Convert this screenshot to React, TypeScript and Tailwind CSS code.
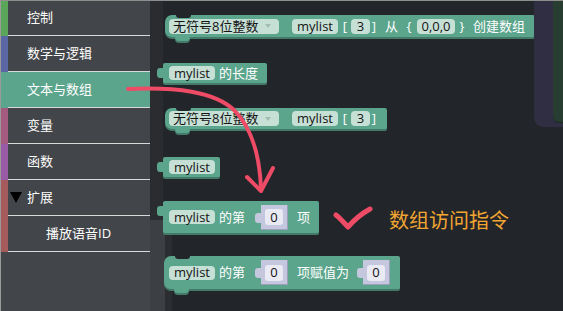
import React from "react";

type Kids = { children?: React.ReactNode; className?: string };

function Pill({ children, className = "" }: Kids) {
  return (
    <span
      className={`inline-flex shrink-0 items-center justify-center rounded-[4px] bg-[#c7e0d6] text-[13px] leading-none text-[#141414] ${className}`}
    >
      {children}
    </span>
  );
}

function T({ children, className = "" }: Kids) {
  return (
    <span className={`inline-flex shrink-0 items-center text-[13px] leading-none text-white ${className}`}>
      {children}
    </span>
  );
}

function Br({ children, className = "" }: Kids) {
  return (
    <span className={`inline-flex w-[6px] shrink-0 justify-center text-[13px] leading-none text-white ${className}`}>
      {children}
    </span>
  );
}

function Socket({ className = "" }: Kids) {
  return (
    <span
      className={`relative inline-flex h-[25px] w-[27px] shrink-0 items-center bg-[#c5c7de] pl-[4px] shadow-[inset_-1px_-1px_0_#9c9fba] ${className}`}
    >
      <span className="absolute -left-[6px] top-[8px] h-[10px] w-[6px] rounded-l-[3px] bg-[#c5c7de]" />
      <span className="inline-flex h-[16px] w-[18px] items-center justify-center rounded-[3px] bg-[#e9eaf4] text-[13px] leading-none text-[#111]">
        0
      </span>
    </span>
  );
}

function Dropdown() {
  return (
    <Pill className="h-[15px] w-[110px] justify-start pl-[4px]">
      <span>无符号8位整数</span>
      <svg className="ml-[7px]" width="6" height="4" viewBox="0 0 6 4">
        <polygon points="0,0 6,0 3,4" fill="#a3bcb2" />
      </svg>
    </Pill>
  );
}

function StatementBlock({ children, className = "" }: Kids) {
  return (
    <div
      className={`relative flex shrink-0 items-center rounded-l-[7px] rounded-r-[2px] bg-[#5ba58c] shadow-[0_2px_0_#437a68] ${className}`}
    >
      <span className="absolute left-[11px] top-0 h-[3px] w-[15px] rounded-b-[3px] bg-[#222529]" />
      <span className="absolute -bottom-[4px] left-[10px] h-[4px] w-[15px] rounded-b-[4px] bg-[#5ba58c] shadow-[0_2px_0_#437a68]" />
      {children}
    </div>
  );
}

function ValueBlock({ children, className = "" }: Kids) {
  return (
    <div
      className={`relative flex shrink-0 items-center rounded-[2px] bg-[#5ba58c] shadow-[0_2px_0_#437a68] ${className}`}
    >
      <span className="absolute -left-[6px] top-[5px] h-[10px] w-[6px] rounded-l-[3px] bg-[#5ba58c]" />
      {children}
    </div>
  );
}

function SideItem({
  label,
  stripe,
  selected = false,
  first = false,
}: {
  label: React.ReactNode;
  stripe: string;
  selected?: boolean;
  first?: boolean;
}) {
  return (
    <div className={`flex ${first ? "h-[35px]" : "h-[36px]"} ${selected ? "bg-[#5ba58c]" : ""}`}>
      <div className={`w-[7px] ${stripe}`} />
      <div className="flex flex-1 items-center border-b border-[#dadada] text-[13px] text-white">{label}</div>
    </div>
  );
}

export default function App() {
  return (
    <div className="relative flex h-[311px] w-[563px] overflow-hidden border-t border-[#8e8e8e] bg-[#222529] font-['Open_Sans','Noto_Sans_CJK_SC',sans-serif]">
      {/* Sidebar */}
      <div className="flex w-[150px] shrink-0 flex-col border-l border-[#9a9a9a] bg-[#424549]">
        <SideItem first stripe="bg-[#5ba55b]" label={<span className="pl-[19px]">控制</span>} />
        <SideItem stripe="bg-[#5b67a5]" label={<span className="pl-[19px]">数学与逻辑</span>} />
        <SideItem selected stripe="bg-[#5ba58c]" label={<span className="pl-[19px]">文本与数组</span>} />
        <SideItem stripe="bg-[#a55b80]" label={<span className="pl-[19px]">变量</span>} />
        <SideItem stripe="bg-[#995ba5]" label={<span className="pl-[19px]">函数</span>} />
        <SideItem
          stripe="bg-[#a55b5b]"
          label={
            <span className="flex items-center pl-[2px]">
              <svg width="12" height="11" viewBox="0 0 12 11">
                <polygon points="0,0 12,0 6,11" fill="#000" />
              </svg>
              <span className="ml-[5px]">扩展</span>
            </span>
          }
        />
        <SideItem stripe="bg-[#a55b5b]" label={<span className="pl-[38px]">播放语音ID</span>} />
      </div>

      {/* Workspace */}
      <div className="relative flex flex-1 flex-col bg-[image:linear-gradient(to_right,#3c3f43_15px,#2b2d31_15px,#2b2d31_22px,transparent_22px),linear-gradient(to_right,#2a2c30_13px,#222529_13px)] bg-[length:100%_100%,100%_100%] bg-[position:0_219px,0_0] bg-no-repeat pt-[14px]">
        {/* Block 1 */}
        <div className="flex">
          <StatementBlock className="ml-[15px] h-[22px] pl-[4px] pr-[10px]">
            <Dropdown />
            <Pill className="ml-[13px] h-[15px] w-[46px]">mylist</Pill>
            <Br className="ml-[4px]">[</Br>
            <Pill className="ml-[3px] h-[15px] w-[19px]">3</Pill>
            <Br className="ml-[1px]">]</Br>
            <T className="ml-[8px]">从</T>
            <Br className="ml-[8px]">{"{"}</Br>
            <Pill className="ml-[5px] h-[15px] w-[38px]">0,0,0</Pill>
            <Br className="ml-[4px]">{"}"}</Br>
            <T className="ml-[8px]">创建数组</T>
          </StatementBlock>
        </div>

        {/* Block 2 */}
        <div className="mt-[26px] flex">
          <ValueBlock className="ml-[13px] h-[20px] pl-[6px] pr-[9px]">
            <Pill className="h-[14px] w-[46px]">mylist</Pill>
            <T className="ml-[4px]">的长度</T>
          </ValueBlock>
        </div>

        {/* Block 3 */}
        <div className="mt-[25px] flex">
          <StatementBlock className="ml-[15px] h-[21px] pl-[4px] pr-[10px]">
            <Dropdown />
            <Pill className="ml-[13px] h-[15px] w-[46px]">mylist</Pill>
            <Br className="ml-[4px]">[</Br>
            <Pill className="ml-[3px] h-[15px] w-[19px]">3</Pill>
            <Br className="ml-[1px]">]</Br>
          </StatementBlock>
        </div>

        {/* Block 4 */}
        <div className="mt-[28px] flex">
          <ValueBlock className="ml-[13px] h-[20px] pl-[6px] pr-[5px]">
            <Pill className="h-[14px] w-[46px]">mylist</Pill>
          </ValueBlock>
        </div>

        {/* Block 5 + annotation */}
        <div className="mt-[24px] flex items-start">
          <ValueBlock className="ml-[13px] h-[32px] pl-[6px] pr-[9px]">
            <Pill className="h-[14px] w-[46px]">mylist</Pill>
            <T className="ml-[4px]">的第</T>
            <Socket className="ml-[16px]" />
            <T className="ml-[9px]">项</T>
          </ValueBlock>
          <svg className="ml-[14px] mt-[6px] overflow-visible" width="40" height="24" viewBox="0 0 40 24">
            <path
              d="M3 8 C 7 11, 11 16, 15 20 C 21 13, 28 7, 37 2"
              fill="none"
              stroke="#ee4b66"
              strokeWidth="5"
              strokeLinecap="round"
              strokeLinejoin="round"
            />
          </svg>
          <span className="ml-[16px] mt-[8px] text-[20px] leading-[24px] text-[#f2a531]">数组访问指令</span>
        </div>

        {/* Block 6 */}
        <div className="mt-[23px] flex">
          <StatementBlock className="ml-[14px] h-[33px] pl-[5px] pr-[10px]">
            <Pill className="h-[14px] w-[46px]">mylist</Pill>
            <T className="ml-[4px]">的第</T>
            <Socket className="ml-[16px]" />
            <T className="ml-[9px]">项赋值为</T>
            <Socket className="ml-[14px]" />
          </StatementBlock>
        </div>

        {/* Top-right panel */}
        <div className="absolute right-0 top-0 flex h-[126px] w-[29px] justify-end rounded-bl-[9px] bg-[#302e43]">
          <div className="h-[121px] w-[10px] rounded-bl-[6px] bg-[#283d31] shadow-[0_1px_0_#1b2a21]" />
        </div>
      </div>

      {/* Arrow annotation */}
      <svg className="pointer-events-none absolute left-0 top-0" width="563" height="311" viewBox="0 0 563 311">
        <path
          d="M128 88 C 175 86, 215 90, 235 110 C 252 128, 260 155, 261 189"
          fill="none"
          stroke="#ee4b66"
          strokeWidth="4"
          strokeLinecap="round"
        />
        <path
          d="M247 176 L261 190 L273 167"
          fill="none"
          stroke="#ee4b66"
          strokeWidth="4"
          strokeLinecap="round"
          strokeLinejoin="round"
        />
      </svg>
    </div>
  );
}
